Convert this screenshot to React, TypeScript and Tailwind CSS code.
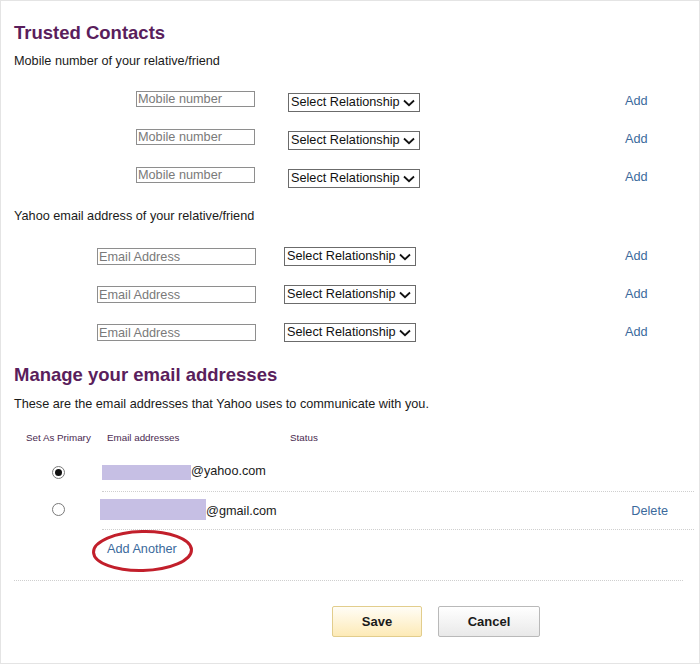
import React from "react";

const link = "text-[#3b6a9c]";

function Select({ className = "" }: { className?: string }) {
  return (
    <div
      className={`flex h-[19px] w-[132px] items-center justify-between border border-[#6b6b6b] bg-white pl-[2px] pr-[4px] text-[12.7px] leading-none text-[#111] ${className}`}
    >
      <span>Select Relationship</span>
      <svg width="12" height="8" viewBox="0 0 12 8" className="mt-[1px]">
        <path d="M1 1.5 L6 6.2 L11 1.5" fill="none" stroke="#111" strokeWidth="1.8" />
      </svg>
    </div>
  );
}

function MobileRow() {
  return (
    <div className="flex h-[20px] items-start">
      <input
        placeholder="Mobile number"
        className="ml-[122px] h-[16px] w-[119px] border border-[#8e8e8e] px-[1px] text-[12.7px] leading-none outline-none placeholder:text-[#7a7a7a]"
      />
      <Select className="ml-[33px] mt-[2px]" />
      <span className={`ml-[205px] mt-[2px] text-[12.7px] leading-[16px] ${link}`}>Add</span>
    </div>
  );
}

function EmailRow() {
  return (
    <div className="flex h-[20px] items-start">
      <input
        placeholder="Email Address"
        className="ml-[83px] mt-[1px] h-[17px] w-[159px] border border-[#8e8e8e] px-[1px] text-[12.7px] leading-none outline-none placeholder:text-[#7a7a7a]"
      />
      <Select className="ml-[28px]" />
      <span className={`ml-[209px] mt-[1px] text-[12.7px] leading-[16px] ${link}`}>Add</span>
    </div>
  );
}

function Radio({ checked }: { checked?: boolean }) {
  return (
    <span className="flex h-[13px] w-[13px] items-center justify-center rounded-full border border-[#7a7a7a] bg-white">
      {checked && <span className="h-[7px] w-[7px] rounded-full bg-[#111]" />}
    </span>
  );
}

export default function App() {
  return (
    <div
      className="box-border min-h-[664px] w-[700px] border border-[#e4e4e4] bg-white pl-[13px] pt-[21px] text-[#1a1a1a]"
      style={{ fontFamily: '"Liberation Sans", Arial, sans-serif' }}
    >
      <h1 className="h-[22px] text-[18.5px] font-bold leading-[22px] text-[#5a1e5c]">Trusted Contacts</h1>
      <p className="mt-[9px] text-[12.7px] leading-[16px]">Mobile number of your relative/friend</p>

      <div className="mt-[22px] flex flex-col gap-[18px]">
        <MobileRow />
        <MobileRow />
        <MobileRow />
      </div>

      <p className="mt-[21px] text-[12.7px] leading-[16px]">Yahoo email address of your relative/friend</p>

      <div className="mt-[23px] flex flex-col gap-[18px]">
        <EmailRow />
        <EmailRow />
        <EmailRow />
      </div>

      <h2 className="mt-[21px] h-[22px] text-[18.5px] font-bold leading-[22px] text-[#5a1e5c]">
        Manage your email addresses
      </h2>
      <p className="mt-[10px] text-[12.7px] leading-[16px]">
        These are the email addresses that Yahoo uses to communicate with you.
      </p>

      <div className="mt-[20px] flex h-[12px] items-center pl-[12px] text-[9.8px] leading-[12px] text-[#4a2a50]">
        <span className="w-[81px]">Set As Primary</span>
        <span className="w-[183px]">Email addresses</span>
        <span>Status</span>
      </div>

      <div className="flex h-[48px] pl-[12px]">
        <div className="flex w-[76px] items-center pl-[26px] pt-[9px]">
          <Radio checked />
        </div>
        <div className="flex w-[592px] items-center border-b border-dotted border-[#cfcfcf] pt-[9px] text-[12.7px]">
          <span className="h-[15px] w-[89px] bg-[#c6bfe4]" />
          <span>@yahoo.com</span>
        </div>
      </div>

      <div className="flex h-[38px] pl-[12px]">
        <div className="flex w-[76px] items-center pb-[3px] pl-[26px]">
          <Radio />
        </div>
        <div className="flex w-[592px] items-center border-b border-dotted border-[#cfcfcf] pb-[3px] text-[12.7px]">
          <span className="-ml-[2px] h-[21px] w-[106px] bg-[#c6bfe4]" />
          <span className="mt-[5px]">@gmail.com</span>
          <span className={`ml-auto mr-[26px] mt-[5px] ${link}`}>Delete</span>
        </div>
      </div>

      <div className="mt-[11px] h-[16px] pl-[93px] text-[12.7px] leading-[16px]">
        <span className={`relative inline-block align-top text-[12.7px] leading-[16px] ${link}`}>
          Add Another
          <svg
            className="pointer-events-none absolute left-[-16px] top-[-12px]"
            width="104"
            height="44"
            viewBox="0 0 104 44"
          >
            <ellipse
              cx="51.5"
              cy="22"
              rx="49"
              ry="19.5"
              fill="none"
              stroke="#c21f2b"
              strokeWidth="3"
              transform="rotate(-1.5 51.5 22)"
            />
          </svg>
        </span>
      </div>

      <div className="mt-[23px] w-[669px] border-t border-dotted border-[#cfcfcf]" />

      <div className="mt-[25px] flex gap-[16px] pl-[318px]">
        <button className="h-[31px] w-[90px] rounded-[2px] border border-[#e2cd8c] bg-gradient-to-b from-[#fffdf6] to-[#fdeab6] text-[13px] font-bold text-[#1a1a1a]">
          Save
        </button>
        <button className="h-[31px] w-[102px] rounded-[2px] border border-[#b9b9b9] bg-gradient-to-b from-[#ffffff] to-[#e9e9e9] text-[13px] font-bold text-[#1a1a1a]">
          Cancel
        </button>
      </div>
    </div>
  );
}
